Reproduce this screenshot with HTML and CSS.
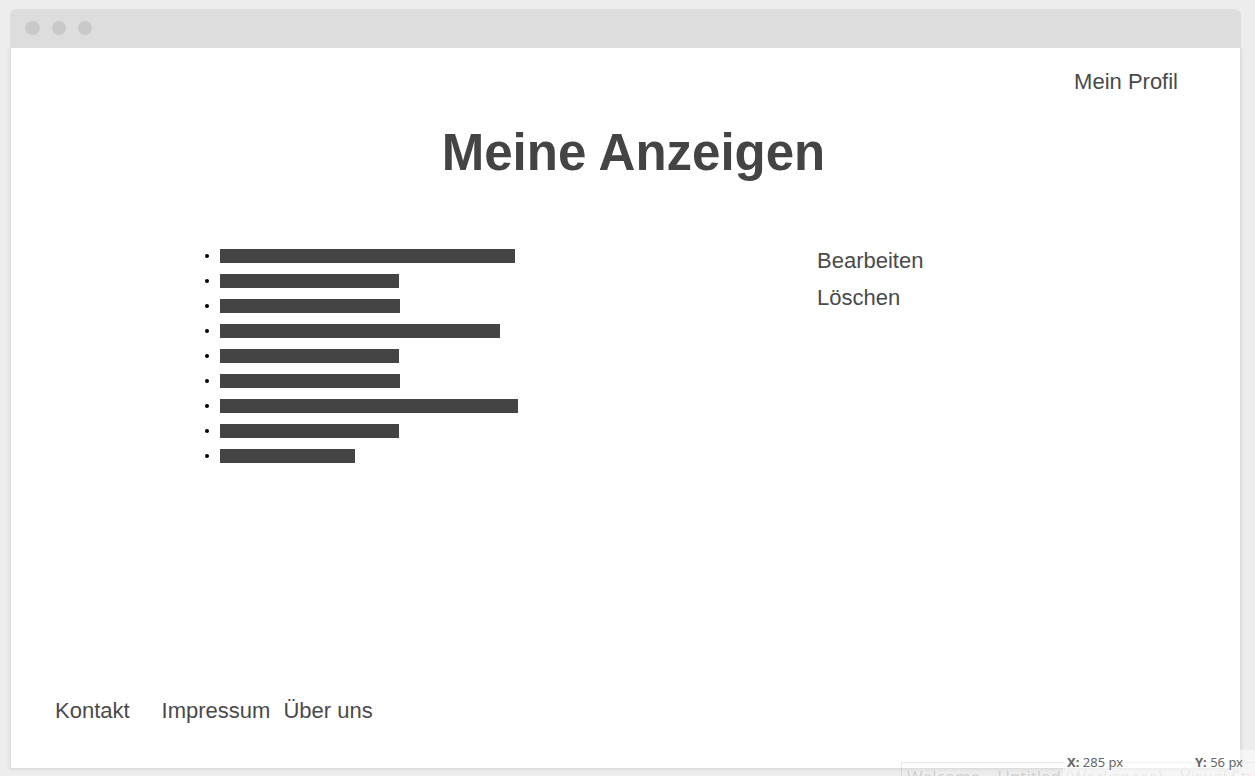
FILE: index.html
```html
<!DOCTYPE html>
<html lang="de">
<head>
<meta charset="utf-8">
<title>Meine Anzeigen</title>
<link rel="stylesheet" href="styles.css">
</head>
<body>
<div class="window">
  <div class="titlebar">
    <span class="dot dot-first"></span><span class="dot"></span><span class="dot"></span>
  </div>
  <div class="page">
    <header class="top"><a class="link" href="#profil">Mein Profil</a></header>
    <h1 class="title">Meine Anzeigen</h1>
    <main class="content">
      <ul class="ads">
        <li class="ad"><span class="bar" style="width:295px"></span></li>
        <li class="ad"><span class="bar" style="width:179px"></span></li>
        <li class="ad"><span class="bar" style="width:180px"></span></li>
        <li class="ad"><span class="bar" style="width:280px"></span></li>
        <li class="ad"><span class="bar" style="width:179px"></span></li>
        <li class="ad"><span class="bar" style="width:180px"></span></li>
        <li class="ad"><span class="bar" style="width:298px"></span></li>
        <li class="ad"><span class="bar" style="width:179px"></span></li>
        <li class="ad"><span class="bar" style="width:135px"></span></li>
      </ul>
      <nav class="actions">
        <a class="link" href="#bearbeiten">Bearbeiten</a>
        <a class="link" href="#loeschen">Löschen</a>
      </nav>
    </main>
    <footer class="footer">
      <a class="link contact" href="#kontakt">Kontakt</a>
      <a class="link imprint" href="#impressum">Impressum</a>
      <a class="link" href="#ueber-uns">Über uns</a>
    </footer>
  </div>
</div>
<div class="ghost">Welcome – Untitled (Workspace) – Visual Studio</div>
<div class="status">
  <span class="coord"><b>X:</b> 285 px</span>
  <span class="coord"><b>Y:</b> 56 px</span>
</div>
</body>
</html>
```
FILE: styles.css
```css
* {
  box-sizing: border-box;
}

body {
  margin: 0;
  position: relative;
  display: flex;
  height: 100vh;
  padding: 9px 14px 7px 10px;
  overflow: hidden;
  background: #ededed;
  color: #444;
  font-family: "Liberation Sans", Arial, sans-serif;
}

.window {
  flex: 1;
  display: flex;
  flex-direction: column;
}

.titlebar {
  display: flex;
  align-items: center;
  gap: 12px;
  height: 39px;
  padding: 0 15px 2px;
  border-radius: 6px 6px 0 0;
  background: #ddd;
}

.dot {
  width: 14px;
  height: 14px;
  border-radius: 50%;
  background: #c9c9c9;
}

.dot-first {
  width: 15px;
}

.page {
  flex: 1;
  display: flex;
  flex-direction: column;
  border: 1px solid #ddd;
  border-top: 0;
  background: #fff;
  box-shadow: 0 0 4px rgba(0, 0, 0, 0.1);
  clip-path: inset(0 -6px -6px -6px);
}

.link {
  color: #4a4a4a;
  font-size: 22px;
  line-height: 26px;
  text-decoration: none;
}

.top {
  display: flex;
  justify-content: flex-end;
  padding: 21px 62px 0 0;
}

.title {
  margin: 29px 0 0;
  padding-left: 16px;
  font-size: 51px;
  line-height: 58px;
  text-align: center;
}

.content {
  display: grid;
  grid-template-columns: 806px 1fr;
  margin-top: 64px;
}

.ads {
  display: flex;
  flex-direction: column;
  gap: 11px;
  margin: 3px 0 0;
  padding: 0 0 0 194px;
  list-style: none;
}

.ad {
  display: flex;
  align-items: center;
  gap: 11px;
}

.ad::before {
  content: "";
  width: 4px;
  height: 4px;
  border-radius: 50%;
  background: #000;
}

.bar {
  height: 14px;
  background: #444;
}

.actions {
  display: flex;
  flex-direction: column;
  gap: 11px;
  padding-top: 2px;
}

.footer {
  display: flex;
  align-items: flex-end;
  margin-top: auto;
  padding: 0 44px 44px;
}

.contact {
  margin-right: 32px;
}

.imprint {
  margin-right: 13px;
}

.status {
  position: absolute;
  right: 0;
  bottom: 0;
  display: flex;
  justify-content: space-between;
  width: 192px;
  height: 26px;
  padding: 4px 12px 0 4px;
  background: rgba(255, 255, 255, 0.5);
  color: #666;
  font-family: "Noto Sans", sans-serif;
  font-size: 13px;
  line-height: 17px;
}

.ghost {
  position: absolute;
  right: 0;
  bottom: 0;
  width: 354px;
  height: 14px;
  padding-left: 5px;
  overflow: hidden;
  border: solid rgba(0, 0, 0, 0.09);
  border-width: 1px 0 0 1px;
  color: rgba(0, 0, 0, 0.15);
  font-family: "Open Sans", sans-serif;
  font-size: 17px;
  line-height: 28px;
  white-space: nowrap;
}
```
